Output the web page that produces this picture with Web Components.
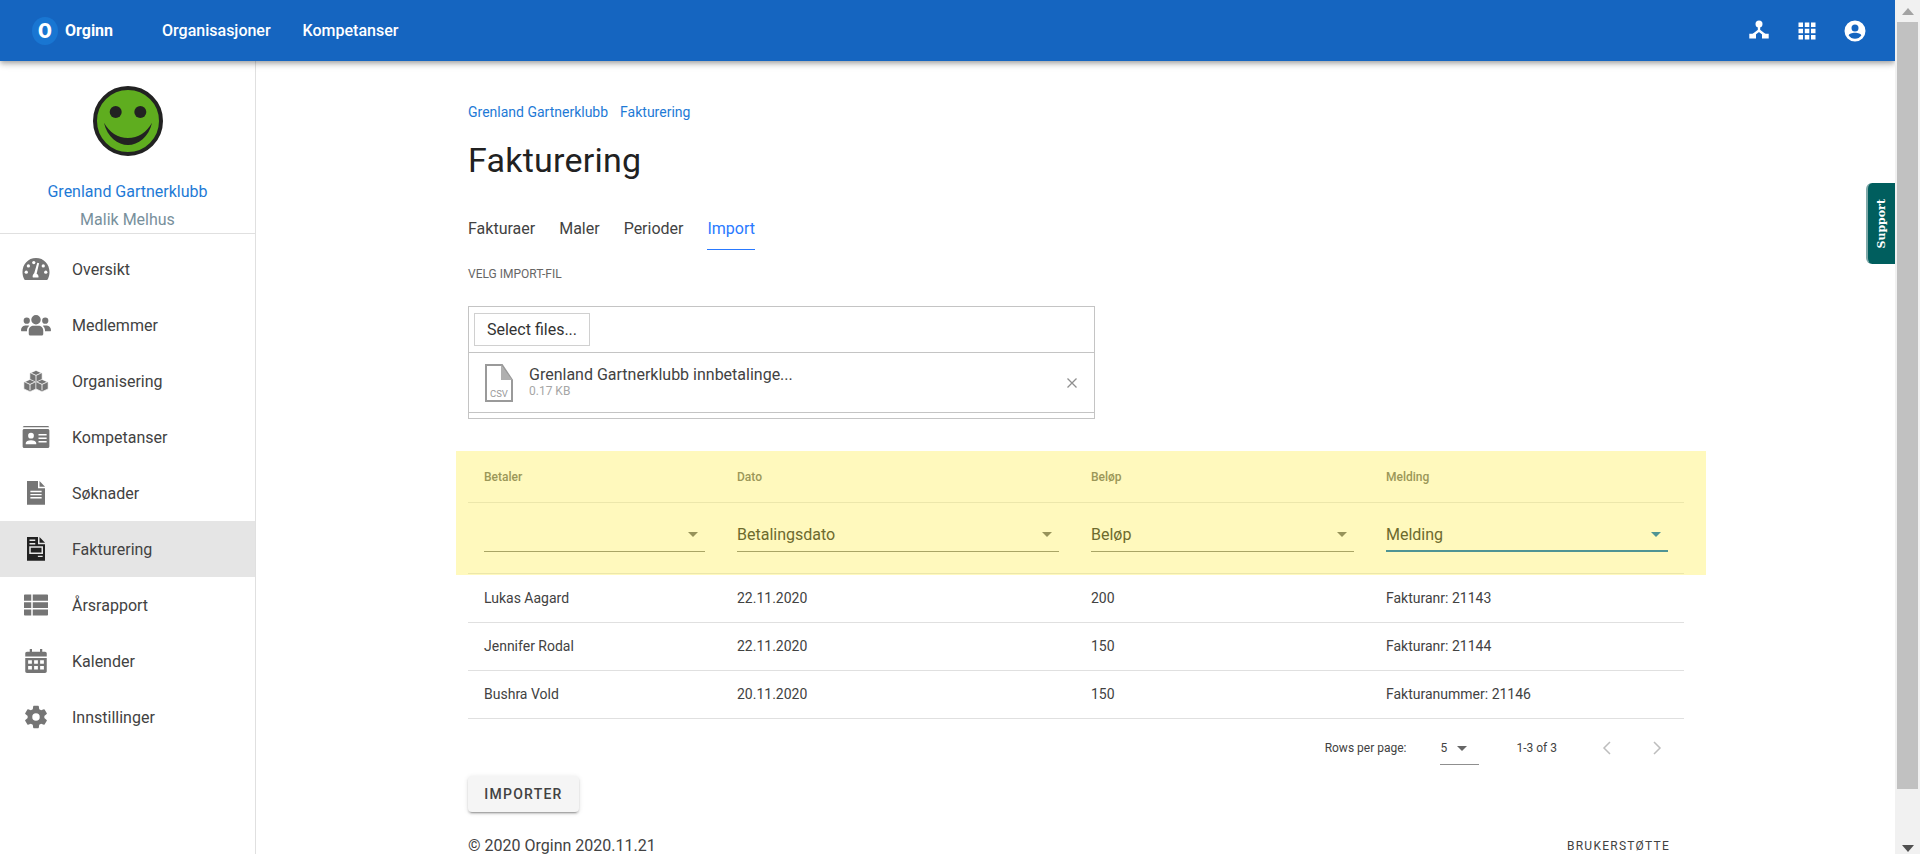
<!DOCTYPE html>
<html lang="no">
<head>
<meta charset="utf-8">
<title>Fakturering</title>
<style>
    html, body { margin: 0; height: 100%; overflow: hidden; background: #fff; }
    body { font-family: Roboto, "Liberation Sans", sans-serif; color: #212121; }
</style>
</head>
<body>
<app-shell>
    <top-bar slot="top"></top-bar>
    <side-nav slot="side"></side-nav>
    <import-page slot="main"></import-page>
    <support-tab slot="over"></support-tab>
</app-shell>

<script>
// one cube of the "organisering" icon, the face lines are cut out in white
function cube(cx, cy) {
    const w = 4.9, h = 4.9, s = 2.2;
    return `<path d="M${cx} ${cy-h}L${cx+w} ${cy-h+s}V${cy+h-s}L${cx} ${cy+h}L${cx-w} ${cy+h-s}V${cy-h+s}z" stroke="#fff" stroke-width=".5"/>
        <path d="M${cx-w+1} ${cy-h+s}L${cx} ${cy-h+s+1.800}L${cx+w-1} ${cy-h+s}M${cx} ${cy-h+s+1.800}V${cy+h-1}" fill="none" stroke="#fff" stroke-width=".7"/>`;
}

const docShell = '<path d="M4.800 2.400h8.800v5.700h5.600V21.400H4.800z"/><path d="M14.800 2.400l4.400 4.500h-4.400z"/>';

const icons = {
    oversikt: `<path d="M12 3.200C5.600 3.200 1.200 8.300 1.200 14.400c0 1.900.4 3.600 1.100 5.100.2.500.6 1.300 1.300 1.300h16.800c.7 0 1.100-.8 1.300-1.300.7-1.500 1.100-3.200 1.100-5.100 0-6.100-4.400-11.200-10.800-11.200z"/>
        <g fill="#fff"><circle cx="10.200" cy="6.800" r="1.300"/><circle cx="5.900" cy="9.500" r="1.300"/><circle cx="4.200" cy="14.500" r="1.300"/><circle cx="19.800" cy="14.500" r="1.300"/><circle cx="17.800" cy="9.500" r="1.300"/>
        <path d="M10.500 15.500l2.500-8.600 1.500.4-2 8.500c1 .5 1.500 1.300 1.500 2.300 0 .3 0 .5-.1.700H9.500c-.1-.2-.2-.4-.2-.7 0-1.100.5-2 1.200-2.600z"/></g>`,
    medlemmer: '<path d="M12 4a3.800 3.800 0 1 1 0 7.600A3.800 3.800 0 0 1 12 4zM4.600 6a2.500 2.500 0 1 1 0 5 2.500 2.500 0 0 1 0-5zM19.400 6a2.500 2.500 0 1 1 0 5 2.500 2.500 0 0 1 0-5zM7.400 20.300c-.7 0-1.200-.5-1.200-1.200v-2.800c0-2.300 1.800-3.800 3.900-3.800h3.800c2.100 0 3.900 1.500 3.900 3.800v2.800c0 .7-.5 1.200-1.200 1.200zM0 16.100c0-1.900 1.300-3.700 3.300-3.700h2.300c.3 0 .6.100.9.300-1 .8-1.600 2-1.700 3.300v1H1c-.5 0-1-.2-1-.9zM24 16.100c0 .7-.5.900-1 .9h-3.800v-1c-.1-1.300-.7-2.500-1.700-3.300.3-.2.600-.3.900-.3h2.300c2 0 3.300 1.800 3.300 3.700z"/>',
    organisering: cube(12, 8.400) + cube(7.200, 15.600) + cube(16.800, 15.600),
    kompetanser: '<path fill-rule="evenodd" d="M3 3.200h18c.8 0 1.400.4 1.600 1H1.400c.2-.6.800-1 1.600-1zM2.500 5.500h19c.6 0 1.200.5 1.200 1.200v12.900c0 .7-.6 1.200-1.200 1.200h-19c-.6 0-1.200-.5-1.200-1.200V6.700c0-.7.600-1.200 1.200-1.200zM8 8.600a2.300 2.300 0 1 0 0 4.600 2.300 2.300 0 0 0 0-4.600zM3.800 17.800h8.400v-1c0-1.400-1.900-2.300-4.200-2.300s-4.200.9-4.200 2.300zM14 9.500v1.300h6.500V9.500zM14 12.300v1.300h6.500v-1.300zM14 15.100v1.300h6.500v-1.300z"/>',
    soknader: docShell + '<path d="M7.500 10.800h9M7.500 13.300h9M7.500 15.800h9" stroke="#fff" stroke-width="1.100"/>',
    faktura: docShell + '<path d="M6.800 5h4.600M6.800 7.800h4.600M13.500 17.900h3.800" stroke="#e5e5e5" stroke-width="1.100"/><rect x="7.200" y="10.400" width="9.800" height="5" fill="none" stroke="#e5e5e5" stroke-width="1.200"/>',
    arsrapport: '<path d="M3 3.600h5.200v4.900H2.400V4.200c0-.3.300-.6.600-.6zM9.400 3.600H21c.3 0 .6.300.6.600v4.300H9.400zM2.400 9.700h5.800v4.600H2.400zM9.400 9.700h12.200v4.600H9.400zM2.400 15.500h5.800v4.900H3c-.3 0-.6-.3-.6-.6zM9.400 15.500h12.200v4.300c0 .3-.3.6-.6.6H9.400z"/>',
    kalender: '<path fill-rule="evenodd" d="M7 2.400h1.800v2.200h6.400V2.400H17v2.200h2.200c.8 0 1.400.6 1.400 1.400v2.400H3.400V6c0-.8.600-1.400 1.400-1.400H7zM3.400 9.600h17.200v10.600c0 .8-.6 1.400-1.400 1.400H4.800c-.8 0-1.400-.6-1.400-1.400zM5.700 11.400v2.800h3v-2.800zM10.500 11.400v2.800h3v-2.800zM15.300 11.400v2.800h3v-2.800zM5.700 16v2.800h3V16zM10.500 16v2.800h3V16zM15.300 16v2.800h3V16z"/>',
    innstillinger: '<g transform="translate(.800 .800) scale(.933)"><path fill-rule="evenodd" d="M19.140 12.940c.04-.3.060-.61.060-.94 0-.32-.02-.64-.07-.94l2.030-1.580a.49.49 0 0 0 .12-.61l-1.920-3.320a.488.488 0 0 0-.59-.22l-2.390.96c-.5-.38-1.030-.7-1.620-.94l-.36-2.540a.484.484 0 0 0-.48-.41h-3.840c-.24 0-.43.170-.47.410l-.36 2.540c-.59.240-1.130.570-1.620.94l-2.390-.96c-.22-.08-.47 0-.59.220L2.740 8.870c-.12.210-.08.470.12.610l2.030 1.580c-.05.300-.09.630-.09.940s.02.640.07.940l-2.030 1.580a.49.49 0 0 0-.12.610l1.920 3.320c.12.220.37.290.59.220l2.390-.96c.5.380 1.030.7 1.620.94l.36 2.540c.05.240.24.410.48.410h3.840c.24 0 .44-.17.470-.41l.36-2.540c.59-.24 1.130-.56 1.620-.94l2.390.96c.22.080.47 0 .59-.22l1.920-3.320c.12-.22.070-.47-.12-.61zM12 15.200a3.200 3.200 0 1 1 0-6.400 3.200 3.200 0 0 1 0 6.400z"/></g>'
};

function icon(name, size) {
    return `<svg width="${size}" height="${size}" viewBox="0 0 24 24" fill="currentColor">${icons[name]}</svg>`;
}

class AppShell extends HTMLElement {
    constructor() {
        super();
        this.attachShadow({mode: 'open'}).innerHTML = `
        <style>
            :host { display: grid; grid-template-columns: 1fr 25px; height: 854px; overflow: hidden; }
            .page { display: grid; grid-template-rows: 61px 1fr; grid-template-columns: 256px 1fr; position: relative; min-width: 0; overflow: hidden; }
            .top { grid-column: 1 / 3; position: relative; z-index: 2; }
            .bar { background: #f1f1f1; display: flex; flex-direction: column; padding: 0 2px; }
            .arrow { height: 22px; display: flex; align-items: center; justify-content: center; }
            .arrow i { border: 6px solid transparent; border-top: 0; border-bottom: 7px solid #a3a3a3; }
            .thumb { background: #c1c1c1; height: 767px; }
            .down { margin-top: auto; height: 9px; display: flex; justify-content: center; align-items: flex-start; }
            .down i { border: 6px solid transparent; border-bottom: 0; border-top: 7px solid #505050; }
        </style>
        <div class="page">
            <div class="top"><slot name="top"></slot></div>
            <slot name="side"></slot>
            <slot name="main"></slot>
            <slot name="over"></slot>
        </div>
        <div class="bar"><div class="arrow"><i></i></div><div class="thumb"></div><div class="down"><i></i></div></div>`;
    }
}

class TopBar extends HTMLElement {
    constructor() {
        super();
        this.attachShadow({mode: 'open'}).innerHTML = `
        <style>
            :host { display: flex; align-items: center; height: 61px; background: #1565c0; color: #fff; box-shadow: 0 2px 4px -1px rgba(0,0,0,.2), 0 4px 5px rgba(0,0,0,.14), 0 1px 10px rgba(0,0,0,.12); padding: 0 32px; box-sizing: border-box; font-size: 16px; font-weight: 500; }
            .logo { width: 26px; height: 28px; border-radius: 50%; background: #1976d2; display: flex; align-items: center; justify-content: center; font-size: 20px; font-weight: 900; }
            .name { margin: 0 49px 0 7px; font-weight: 700; }
            .link { margin-right: 32px; }
            .end { margin-left: auto; display: flex; align-items: center; gap: 24px; margin-right: -4px; }
            svg { display: block; }
        </style>
        <div class="logo">O</div>
        <div class="name">Orginn</div>
        <div class="link">Organisasjoner</div>
        <div class="link">Kompetanser</div>
        <div class="end">
            <svg width="24" height="24" viewBox="0 0 24 24" fill="#fff"><circle cx="12" cy="5" r="3.500"/><path d="M12 6v5.500L5.500 16.500M12 11.500l6.500 5" fill="none" stroke="#fff" stroke-width="2.400"/><path d="M2.300 14.800h6.700v4.800H2.300zM15 14.800h6.700v4.800H15z"/></svg>
            <svg width="24" height="24" viewBox="0 0 24 24" fill="#fff"><path d="M3.500 3.500h4.500V8H3.500zM9.800 3.500h4.500V8H9.800zM16 3.500h4.500V8H16zM3.500 9.800h4.500v4.500H3.500zM9.800 9.800h4.500v4.500H9.800zM16 9.800h4.500v4.500H16zM3.500 16h4.500v4.500H3.500zM9.800 16h4.500v4.500H9.800zM16 16h4.500v4.500H16z"/></svg>
            <svg width="24" height="24" viewBox="0 0 24 24" fill="#fff"><path fill-rule="evenodd" d="M12 1.500a10.500 10.500 0 1 1 0 21 10.500 10.500 0 0 1 0-21zM12 5.500a3.500 3.500 0 1 0 0 7 3.500 3.500 0 0 0 0-7zM12 19.800c2.600 0 4.900-1.300 6.300-3.300-.1-1.600-3.300-2.700-6.300-2.700s-6.200 1.100-6.300 2.700c1.400 2 3.700 3.300 6.300 3.300z"/></svg>
        </div>`;
    }
}

class NavItem extends HTMLElement {
    constructor() {
        super();
        this.attachShadow({mode: 'open'}).innerHTML = `
        <style>
            :host { display: flex; align-items: center; height: 56px; color: #424242; font-size: 16px; }
            :host([active]) { background: #e5e5e5; }
            .ic { width: 72px; display: flex; justify-content: center; color: #757575; }
            :host([active]) .ic { color: #212121; }
            svg { display: block; }
        </style>
        <div class="ic"></div><slot></slot>`;
    }
    connectedCallback() {
        this.shadowRoot.querySelector('.ic').innerHTML = icon(this.getAttribute('icon'), 30);
    }
}
customElements.define('nav-item', NavItem);

class SideNav extends HTMLElement {
    constructor() {
        super();
        this.attachShadow({mode: 'open'}).innerHTML = `
        <style>
            :host { display: block; border-right: 1px solid #e0e0e0; box-sizing: border-box; height: 793px; }
            .head { height: 172px; display: flex; flex-direction: column; align-items: center; border-bottom: 1px solid #e0e0e0; }
            svg { display: block; margin: 25px 0 24px 0; }
            .club { color: #1e7ad6; font-size: 16px; line-height: 24px; height: 28px; }
            .user { color: #78909c; font-size: 16px; line-height: 24px; }
            .list { padding-top: 7px; }
        </style>
        <div class="head">
            <svg width="70" height="70" viewBox="0 0 70 70">
                <circle cx="35" cy="35" r="33" fill="#5fad1f" stroke="#222" stroke-width="4"/>
                <circle cx="22.700" cy="26" r="6" fill="#222"/><circle cx="47.300" cy="26" r="6" fill="#222"/>
                <path d="M11 36.700C14 51 25 59 35 59s21-8 24-22.300C54 46 45 52 35 52S16 46 11 36.700z" fill="#222"/>
            </svg>
            <div class="club">Grenland Gartnerklubb</div>
            <div class="user">Malik Melhus</div>
        </div>
        <div class="list">
            <nav-item icon="oversikt">Oversikt</nav-item>
            <nav-item icon="medlemmer">Medlemmer</nav-item>
            <nav-item icon="organisering">Organisering</nav-item>
            <nav-item icon="kompetanser">Kompetanser</nav-item>
            <nav-item icon="soknader">Søknader</nav-item>
            <nav-item icon="faktura" active>Fakturering</nav-item>
            <nav-item icon="arsrapport">Årsrapport</nav-item>
            <nav-item icon="kalender">Kalender</nav-item>
            <nav-item icon="innstillinger">Innstillinger</nav-item>
        </div>`;
    }
}

class TabBar extends HTMLElement {
    constructor() {
        super();
        this.attachShadow({mode: 'open'}).innerHTML = `
        <style>
            :host { display: flex; gap: 24px; font-size: 16px; color: #424242; height: 43px; }
            .tab { height: 42px; display: flex; align-items: center; }
            .on { color: #2979ff; border-bottom: 1px solid #2979ff; }
        </style>
        <div class="tab">Fakturaer</div>
        <div class="tab">Maler</div>
        <div class="tab">Perioder</div>
        <div class="tab on">Import</div>`;
    }
}

class FileUpload extends HTMLElement {
    constructor() {
        super();
        this.attachShadow({mode: 'open'}).innerHTML = `
        <style>
            :host { display: block; width: 627px; border: 1px solid #c4c4c4; box-sizing: border-box; height: 113px; font-size: 16px; color: #424242; }
            .top { height: 46px; padding: 6px 0 0 5px; box-sizing: border-box; border-bottom: 1px solid #c4c4c4; }
            .btn { display: inline-flex; align-items: center; justify-content: center; width: 116px; height: 33px; border: 1px solid #d0d0d0; box-sizing: border-box; color: #333; }
            .file { height: 60px; box-sizing: border-box; display: flex; align-items: center; border-bottom: 1px solid #c4c4c4; padding: 0 16px; }
            svg { display: block; }
            .info { margin-left: 16px; flex: 1; line-height: 19px; margin-top: -3px; }
            .size { font-size: 12px; color: #a6a6a6; line-height: 14px; }
        </style>
        <div class="top"><div class="btn">Select files...</div></div>
        <div class="file">
            <svg width="28" height="38" viewBox="0 0 28 38">
                <path d="M1 1h16l10 15v21H1z" fill="#fff" stroke="#9a9a9a" stroke-width="2"/>
                <path d="M16 1l11 15H16z" fill="#b0b0b0"/>
                <text x="5" y="33" font-family="Roboto, sans-serif" font-size="9.500" fill="#9a9a9a">CSV</text>
            </svg>
            <div class="info"><div>Grenland Gartnerklubb innbetalinge...</div><div class="size">0.17 KB</div></div>
            <svg width="12" height="12" viewBox="0 0 12 12"><path d="M1.500 1.500l9 9M10.500 1.500l-9 9" stroke="#8f8f8f" stroke-width="1.300"/></svg>
        </div>`;
    }
}

class ColumnSelect extends HTMLElement {
    constructor() {
        super();
        this.attachShadow({mode: 'open'}).innerHTML = `
        <style>
            :host { display: flex; align-items: center; height: 34px; border-bottom: 1px solid #a9a565; color: #6d6a2e; font-size: 16px; box-sizing: border-box; position: relative; margin-top: -6px; }
            :host([focused]) { border-bottom: 2px solid #4f9494; }
            i { position: absolute; right: 7px; top: 14px; border: 5px solid transparent; border-bottom: 0; border-top-color: #97935a; }
            :host([focused]) i { border-top-color: #4f9494; }
        </style>
        <slot></slot><i></i>`;
    }
}

class ImportTable extends HTMLElement {
    constructor() {
        super();
        this.attachShadow({mode: 'open'}).innerHTML = `
        <style>
            :host { display: block; width: 1216px; }
            .hl { background: #fff9bd; margin: 0 -22px 0 -12px; padding: 0 22px 0 12px; height: 124px; }
            .row { display: grid; grid-template-columns: 253px 354px 295px 314px; box-sizing: border-box; }
            .row > * { padding: 0 16px; display: flex; align-items: center; min-width: 0; }
            .h { height: 52px; font-size: 12px; font-weight: 500; color: #9b9758; border-bottom: 1px solid #ece7ab; }
            .f { height: 71px; border-bottom: 1px solid #ece7ab; }
            .f column-select { width: 100%; }
            .b { height: 48px; font-size: 14px; color: #424242; border-bottom: 1px solid #e0e0e0; }
            .b > * { padding-bottom: 2px; }
        </style>
        <div class="hl">
            <div class="row h"><div>Betaler</div><div>Dato</div><div>Beløp</div><div>Melding</div></div>
            <div class="row f">
                <div><column-select></column-select></div>
                <div><column-select>Betalingsdato</column-select></div>
                <div><column-select>Beløp</column-select></div>
                <div><column-select focused>Melding</column-select></div>
            </div>
        </div>
        <div class="row b"><div>Lukas Aagard</div><div>22.11.2020</div><div>200</div><div>Fakturanr: 21143</div></div>
        <div class="row b"><div>Jennifer Rodal</div><div>22.11.2020</div><div>150</div><div>Fakturanr: 21144</div></div>
        <div class="row b"><div>Bushra Vold</div><div>20.11.2020</div><div>150</div><div>Fakturanummer: 21146</div></div>`;
    }
}

class TablePager extends HTMLElement {
    constructor() {
        super();
        this.attachShadow({mode: 'open'}).innerHTML = `
        <style>
            :host { display: flex; justify-content: flex-end; align-items: center; height: 57px; width: 1216px; font-size: 12px; color: #424242; box-sizing: border-box; padding-right: 20px; }
            .sel { margin-left: 34px; width: 39px; height: 32px; border-bottom: 1px solid #8f8f8f; box-sizing: border-box; display: flex; align-items: center; margin-top: 2px; }
            .sel i { margin-left: 10px; border: 5px solid transparent; border-bottom: 0; border-top-color: #666; }
            .count { margin-left: 37px; }
            .nav { display: flex; gap: 36px; margin-left: 43px; }
            svg { display: block; }
        </style>
        <span>Rows per page:</span>
        <div class="sel">5<i></i></div>
        <span class="count">1-3 of 3</span>
        <div class="nav">
            <svg width="14" height="16" viewBox="0 0 14 16"><path d="M10 2L4 8l6 6" fill="none" stroke="#bdbdbd" stroke-width="1.500"/></svg>
            <svg width="14" height="16" viewBox="0 0 14 16"><path d="M4 2l6 6-6 6" fill="none" stroke="#bdbdbd" stroke-width="1.500"/></svg>
        </div>`;
    }
}

class ImportPage extends HTMLElement {
    constructor() {
        super();
        this.attachShadow({mode: 'open'}).innerHTML = `
        <style>
            :host { display: block; padding: 41px 0 0 212px; color: #212121; }
            .crumbs { display: flex; gap: 12px; font-size: 14px; line-height: 20px; color: #1e7ad6; }
            h1 { margin: 14px 0 23px; font-size: 34px; font-weight: 400; letter-spacing: .25px; line-height: 48px; color: #212121; }
            .lbl { font-size: 12px; line-height: 16px; color: #666; margin: 16px 0 24px; }
            import-table { margin-top: 32px; }
            .btn { width: 111px; height: 36px; background: #f5f5f5; border-radius: 4px; box-shadow: 0 3px 1px -2px rgba(0,0,0,.2), 0 2px 2px rgba(0,0,0,.14), 0 1px 5px rgba(0,0,0,.12); display: flex; align-items: center; justify-content: center; font-size: 14px; font-weight: 500; letter-spacing: 1.250px; color: #424242; }
            .foot { display: flex; justify-content: space-between; width: 1216px; margin-top: 26px; font-size: 16px; color: #424242; line-height: 16px; }
            .foot span + span { font-size: 12px; letter-spacing: 1.250px; padding-right: 14px; }
        </style>
        <div class="crumbs"><span>Grenland Gartnerklubb</span><span>Fakturering</span></div>
        <h1>Fakturering</h1>
        <tab-bar></tab-bar>
        <div class="lbl">VELG IMPORT-FIL</div>
        <file-upload></file-upload>
        <import-table></import-table>
        <table-pager></table-pager>
        <div class="btn">IMPORTER</div>
        <div class="foot"><span>© 2020 Orginn 2020.11.21</span><span>BRUKERSTØTTE</span></div>`;
    }
}

class SupportTab extends HTMLElement {
    constructor() {
        super();
        this.attachShadow({mode: 'open'}).innerHTML = `
        <style>
            :host { position: absolute; right: 0; top: 183px; width: 29px; height: 81px; background: #005e5e; border-left: 2px solid #7fa9a9; border-radius: 6px 0 0 6px; box-sizing: border-box; display: flex; align-items: center; justify-content: center; color: #fff; font: bold 11px "DejaVu Serif", "Liberation Serif", serif; }
            span { writing-mode: vertical-rl; transform: rotate(180deg); }
        </style>
        <span>Support</span>`;
    }
}

customElements.define('app-shell', AppShell);
customElements.define('top-bar', TopBar);
customElements.define('side-nav', SideNav);
customElements.define('tab-bar', TabBar);
customElements.define('file-upload', FileUpload);
customElements.define('column-select', ColumnSelect);
customElements.define('import-table', ImportTable);
customElements.define('table-pager', TablePager);
customElements.define('import-page', ImportPage);
customElements.define('support-tab', SupportTab);
</script>
</body>
</html>
